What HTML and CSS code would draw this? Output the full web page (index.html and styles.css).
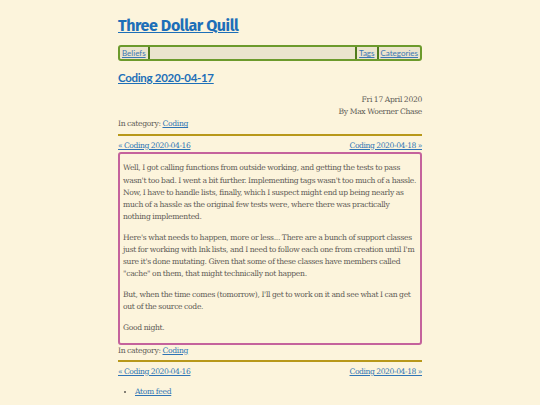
FILE: index.html
```html
<!DOCTYPE html>
<html lang="en">
<head>
<meta charset="utf-8">
<title>Coding 2020-04-17 - Three Dollar Quill</title>
<link rel="stylesheet" href="styles.css">
</head>
<body>
<div class="page">
  <header class="site-header">
    <h1 class="site-title"><a href="#">Three Dollar Quill</a></h1>
    <nav class="topnav">
      <a class="nav-item nav-first" href="#">Beliefs</a>
      <span class="nav-fill"></span>
      <a class="nav-item nav-sep" href="#">Tags</a>
      <a class="nav-item nav-sep" href="#">Categories</a>
    </nav>
  </header>
  <article class="post">
    <h2 class="post-title"><a href="#">Coding 2020-04-17</a></h2>
    <div class="meta">
      <div>Fri 17 April 2020</div>
      <div>By Max Woerner Chase</div>
    </div>
    <div class="category">In category: <a href="#">Coding</a></div>
    <nav class="pager">
      <a href="#">« Coding 2020-04-16</a>
      <a href="#">Coding 2020-04-18 »</a>
    </nav>
    <div class="content">
      <p>Well, I got calling functions from outside working, and getting the tests to pass<br>
      wasn't too bad. I went a bit further. Implementing tags wasn't too much of a hassle.<br>
      Now, I have to handle lists, finally, which I suspect might end up being nearly as<br>
      much of a hassle as the original few tests were, where there was practically<br>
      nothing implemented.</p>
      <p>Here's what needs to happen, more or less... There are a bunch of support classes<br>
      just for working with Ink lists, and I need to follow each one from creation until I'm<br>
      sure it's done mutating. Given that some of these classes have members called<br>
      "cache" on them, that might technically not happen.</p>
      <p>But, when the time comes (tomorrow), I'll get to work on it and see what I can get<br>
      out of the source code.</p>
      <p>Good night.</p>
    </div>
    <div class="category">In category: <a href="#">Coding</a></div>
    <nav class="pager">
      <a href="#">« Coding 2020-04-16</a>
      <a href="#">Coding 2020-04-18 »</a>
    </nav>
  </article>
  <ul class="feeds">
    <li><a href="#">Atom feed</a></li>
  </ul>
</div>
</body>
</html>
```

FILE: styles.css
```css
html, body {
  margin: 0;
  padding: 0;
  background: #fcf4dc;
}
body {
  font-family: "DejaVu Serif", "Liberation Serif", serif;
  font-size: 7.6px;
  line-height: 12.2px;
  letter-spacing: -0.3px;
  word-spacing: -0.3px;
  color: #5c5a55;
}
a {
  color: #2f74b5;
}
.page {
  width: 304px;
  margin: 0 auto;
  padding-top: 16px;
}
.site-title {
  margin: 0;
  font-family: "Fira Sans", "Lato", "Open Sans", sans-serif;
  font-weight: 700;
  font-size: 16px;
  letter-spacing: -0.4px;
  word-spacing: 0;
  line-height: 20px;
}
.site-title a {
  color: #1d6fb8;
}
.topnav {
  display: flex;
  margin-top: 9px;
  height: 12px;
  border: 2px solid #6c9a2c;
  border-radius: 3px;
  background: #ebe4cd;
  font-family: "Lato", "Open Sans", sans-serif;
  font-size: 8px;
  letter-spacing: 0;
  line-height: 12px;
}
.nav-item {
  padding: 0 2px;
  color: #3b78b3;
}
.nav-first {
  border-right: 2px solid #4f7b1c;
}
.nav-sep {
  border-left: 2px solid #4f7b1c;
}
.nav-fill {
  flex: 1;
}
.post-title {
  margin: 9px 0 0;
  font-family: "Lato", "Open Sans", sans-serif;
  font-weight: 700;
  font-size: 11.5px;
  letter-spacing: -0.3px;
  word-spacing: 0;
  line-height: 16px;
}
.post-title a {
  color: #1d6fb8;
}
.meta {
  margin-top: 8px;
  text-align: right;
}
.pager {
  display: flex;
  justify-content: space-between;
  border-top: 2px solid #b8981a;
  margin-top: 3px;
  padding-top: 4px;
  letter-spacing: -0.4px;
}
.content {
  border: 2px solid #c4629c;
  border-radius: 3px;
  padding: 0 2px 0 3px;
}
.content p {
  margin: 8.5px 0;
}
.feeds {
  margin: 8px 0 0;
  padding-left: 17px;
}
```
